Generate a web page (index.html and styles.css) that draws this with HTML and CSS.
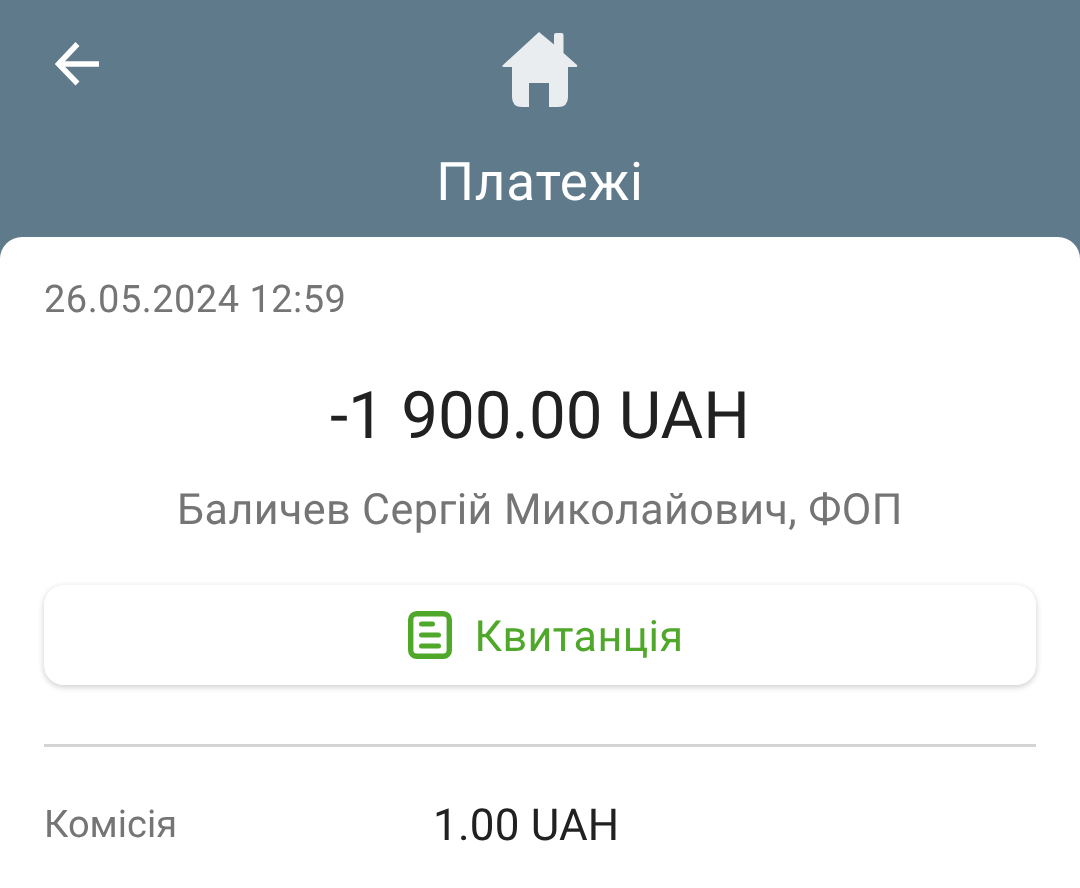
FILE: index.html
```html
<!DOCTYPE html>
<html>

<head>
    <meta charset="utf-8">
    <title>Платежі</title>
    <link rel="stylesheet" href="styles.css">
</head>

<body>
<div class="screen">
    <header class="header">
        <div class="header-top">
            <svg class="back-icon" width="46" height="46" viewBox="0 0 46 46">
                <path d="M22.5 3 L3.5 23 L22.5 42.5 M3.5 23 H44" fill="none" stroke="#fff" stroke-width="5.5"/>
            </svg>
            <svg class="home-icon" width="78" height="78" viewBox="0 0 78 78">
                <path d="M38 2 L53 14.5 V5 Q53 3 55 3 H60.5 Q62.5 3 62.5 5 V23 L76 35 Q77 37 75 37 H67 V67 Q67 77 57 77 H48 V53 H28 V77 H21 Q11 77 11 67 V37 H3 Q0 37 2 35 Z" fill="#e9edf0"/>
            </svg>
        </div>
        <h1 class="title">Платежі</h1>
    </header>
    <main class="card">
        <div class="date">26.05.2024 12:59</div>
        <div class="amount">-1 900.00 UAH</div>
        <div class="payee">Баличев Сергій Миколайович, ФОП</div>
        <div class="receipt-btn">
            <svg class="receipt-icon" width="44" height="48" viewBox="0 0 44 48">
                <rect x="2.7" y="2.7" width="38.6" height="42.6" rx="6" fill="none" stroke="#4fa82a" stroke-width="5.4"/>
                <path d="M13.5 13 H24.5 M13.5 24 H30.5 M13.5 35 H30.5" fill="none" stroke="#4fa82a" stroke-width="5" stroke-linecap="round"/>
            </svg>
            <span class="receipt-label">Квитанція</span>
        </div>
        <hr class="divider">
        <div class="row">
            <span class="row-label">Комісія</span>
            <span class="row-value">1.00 UAH</span>
        </div>
    </main>
</div>
</body>

</html>
```

FILE: styles.css
```css
body {
    font-family: Roboto, "Liberation Sans", sans-serif;
    text-rendering: geometricPrecision;
    margin: 0;
    padding: 0;
}

.screen {
    height: 888px;
    overflow: hidden;
    background-color: #5f7a8a;
    display: flex;
    flex-direction: column;
}

.header {
    height: 237px;
    flex-shrink: 0;
}

.header-top {
    position: relative;
    height: 108px;
    display: flex;
    justify-content: center;
}

.back-icon {
    position: absolute;
    left: 55px;
    top: 41px;
}

.home-icon {
    margin-top: 30px;
}

.title {
    margin: 44px 0 0;
    font-size: 53px;
    font-weight: 400;
    line-height: 61px;
    letter-spacing: 0.8px;
    color: #fff;
    text-align: center;
    will-change: transform;
}

.card {
    flex: 1;
    background-color: #fff;
    border-radius: 22px 22px 0 0;
    padding: 0 44px;
    will-change: transform;
}

.date {
    margin-top: 41px;
    font-size: 38px;
    line-height: 45px;
    letter-spacing: 0.46px;
    color: #757575;
}

.amount {
    margin-top: 53px;
    font-size: 65.5px;
    line-height: 79px;
    color: #212121;
    text-align: center;
}

.payee {
    margin-top: 30px;
    font-size: 43px;
    line-height: 50px;
    letter-spacing: 0.42px;
    color: #757575;
    text-align: center;
}

.receipt-btn {
    margin-top: 50px;
    height: 100px;
    padding-left: 12px;
    border-radius: 20px;
    background-color: #fff;
    box-shadow: 0 2px 6px rgba(0, 0, 0, 0.2);
    display: flex;
    align-items: center;
    justify-content: center;
    gap: 22px;
    font-size: 43px;
    letter-spacing: 0.45px;
    color: #4fa82a;
}

.receipt-label {
    margin-top: 4px;
}

.divider {
    margin: 59px 0 0;
    border: none;
    height: 3px;
    background-color: #d4d4d4;
}

.row {
    margin-top: 52px;
    display: flex;
    align-items: center;
}

.row-label {
    width: 389px;
    font-size: 38px;
    color: #757575;
}

.row-value {
    font-size: 44px;
    letter-spacing: 0.2px;
    color: #212121;
}
```
